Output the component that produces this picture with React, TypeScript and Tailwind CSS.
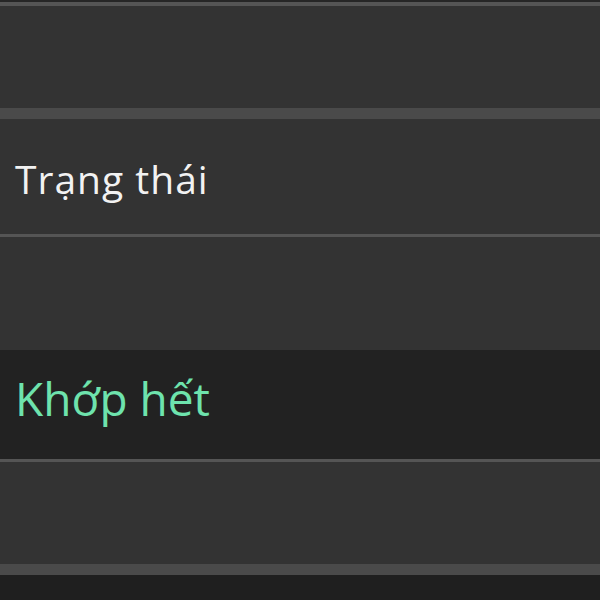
const Row = ({
  children,
  className = "",
}: {
  children?: React.ReactNode;
  className?: string;
}) => <div className={`flex items-center px-[15px] ${className}`}>{children}</div>;

const App = () => {
  return (
    <div
      className="w-[600px] h-[600px] overflow-hidden bg-[#1f1f1f] flex flex-col"
      style={{ fontFamily: "'Open Sans', 'Noto Sans', sans-serif" }}
    >
      <div className="h-[2px] bg-[#262626]" />
      <div className="h-[4px] bg-[#555555]" />
      <Row className="h-[102px] bg-[#333333]" />
      <div className="h-[11px] bg-[#4a4a4a]" />
      <Row className="h-[115px] bg-[#333333] pt-[3px]">
        <span className="text-[39px] leading-none tracking-[1px] text-[#f2f2f2]">Trạng thái</span>
      </Row>
      <div className="h-[3px] bg-[#555555]" />
      <Row className="h-[113px] bg-[#333333]" />
      <Row className="h-[109px] bg-[#222222] pb-[13px]">
        <span className="text-[46px] leading-none text-[#6ee3ad]">Khớp hết</span>
      </Row>
      <div className="h-[3px] bg-[#555555]" />
      <Row className="h-[102px] bg-[#333333]" />
      <div className="h-[11px] bg-[#4a4a4a]" />
      <div className="flex-1 bg-[#1f1f1f]" />
    </div>
  );
};

export default App;
